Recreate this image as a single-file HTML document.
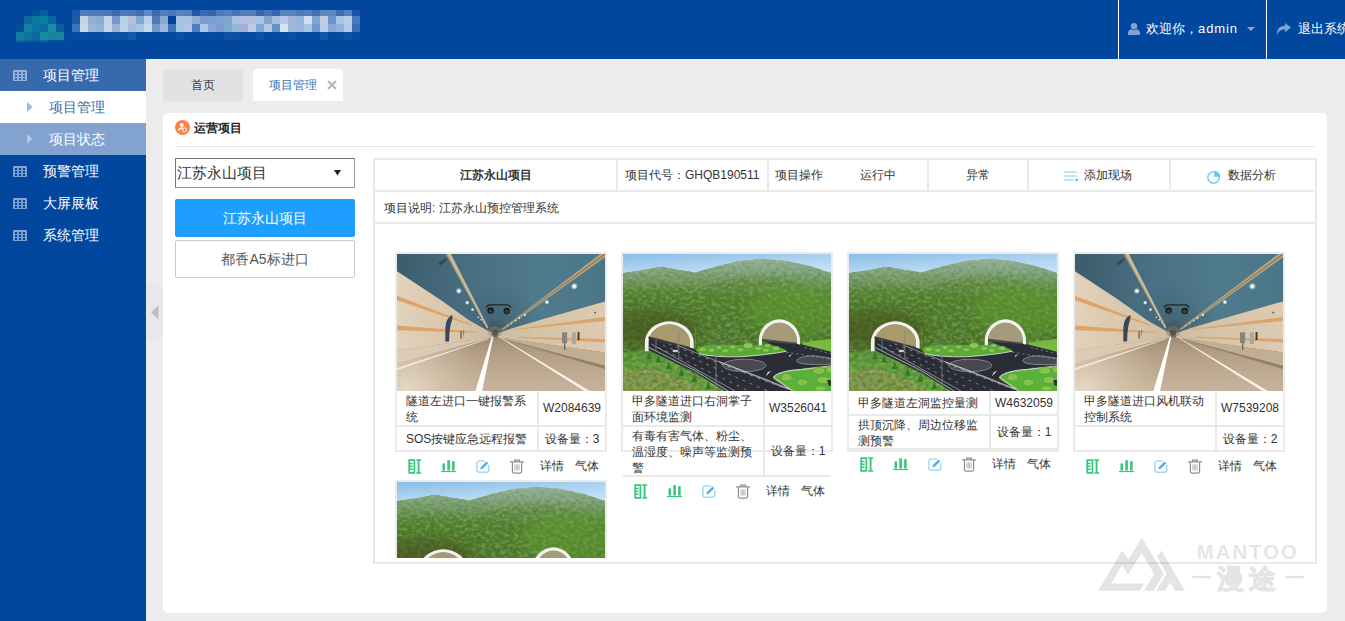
<!DOCTYPE html>
<html><head><meta charset="utf-8"><title>项目管理</title><style>
*{box-sizing:border-box;margin:0;padding:0}
html,body{width:1345px;height:621px;overflow:hidden;background:#ececec;font-family:"Liberation Sans",sans-serif;color:#333}
.a{position:absolute}
#hd{left:0;top:0;width:1345px;height:59px;background:#00479d}
#hd i{position:absolute;display:block}
#sb{left:0;top:59px;width:146px;height:562px;background:#00479d}
.mi{position:absolute;left:0;width:146px;height:32px;color:#fff;font-size:14px;line-height:32px}
.mi span{position:absolute;left:43px;top:0;white-space:nowrap}
.mi.sub span{left:49px}
.mi svg{position:absolute}
.vline{position:absolute;top:0;width:1px;height:59px;background:#fff}
.ht{position:absolute;color:#fff;font-size:13px;line-height:20px;top:19px;white-space:nowrap}
.tab{position:absolute;top:69px;height:32px;font-size:12px;line-height:32px;border-radius:4px 4px 0 0}
#panel{left:163px;top:113px;width:1164px;height:500px;background:#fff;border-radius:5px}
.ln{position:absolute;background:#e9e9e9}
.t12{position:absolute;font-size:12px;line-height:16px;white-space:nowrap;color:#333}
.card{position:absolute;width:212px;height:200px;border:2px solid #ebebeb;background:#fff}
.card .img{position:absolute;left:0;top:0;width:208px;height:137px;overflow:hidden}
.card .img svg{display:block}
.cc{position:absolute}
.ic{position:absolute}
</style></head><body>
<div id="hd" class="a">
<i style="left:32px;top:10px;width:8px;height:6px;background:#03509b"></i><i style="left:40px;top:10px;width:8px;height:6px;background:#055f9c"></i><i style="left:24px;top:16px;width:8px;height:8px;background:#0d69a0"></i><i style="left:32px;top:16px;width:8px;height:8px;background:#0a78a0"></i><i style="left:40px;top:16px;width:8px;height:8px;background:#047fa0"></i><i style="left:48px;top:16px;width:8px;height:8px;background:#0668a0"></i><i style="left:16px;top:24px;width:8px;height:8px;background:#034d9a"></i><i style="left:24px;top:24px;width:8px;height:8px;background:#14809f"></i><i style="left:32px;top:24px;width:8px;height:8px;background:#1073a0"></i><i style="left:40px;top:24px;width:8px;height:8px;background:#0f6ba3"></i><i style="left:48px;top:24px;width:8px;height:8px;background:#1c8ea3"></i><i style="left:56px;top:24px;width:8px;height:8px;background:#0d5f9b"></i><i style="left:16px;top:32px;width:8px;height:8px;background:#10809f"></i><i style="left:24px;top:32px;width:8px;height:8px;background:#0c769f"></i><i style="left:32px;top:32px;width:8px;height:8px;background:#0c68a0"></i><i style="left:40px;top:32px;width:8px;height:8px;background:#168a9f"></i><i style="left:48px;top:32px;width:8px;height:8px;background:#15849f"></i><i style="left:56px;top:32px;width:8px;height:8px;background:#1a859f"></i><i style="left:64px;top:32px;width:8px;height:8px;background:#05499a"></i><i style="left:16px;top:40px;width:8px;height:2px;background:#0a6a9f"></i><i style="left:24px;top:40px;width:8px;height:2px;background:#09659e"></i><i style="left:32px;top:40px;width:8px;height:2px;background:#085c9e"></i><i style="left:40px;top:40px;width:8px;height:2px;background:#0a689e"></i><i style="left:48px;top:40px;width:8px;height:2px;background:#04509b"></i><i style="left:56px;top:40px;width:8px;height:2px;background:#04509b"></i><i style="left:64px;top:40px;width:8px;height:2px;background:#024a9b"></i><i style="left:72px;top:10px;width:8px;height:6px;background:#1d57a5"></i><i style="left:72px;top:16px;width:8px;height:8px;background:#1c5aa8"></i><i style="left:72px;top:24px;width:8px;height:8px;background:#3d73b8"></i><i style="left:72px;top:32px;width:8px;height:8px;background:#064a9f"></i><i style="left:80px;top:10px;width:8px;height:6px;background:#4e7fbd"></i><i style="left:80px;top:16px;width:8px;height:8px;background:#c5d3e6"></i><i style="left:80px;top:24px;width:8px;height:8px;background:#cbd8e8"></i><i style="left:80px;top:32px;width:8px;height:8px;background:#0a4ca0"></i><i style="left:88px;top:10px;width:8px;height:6px;background:#4a7cbb"></i><i style="left:88px;top:16px;width:8px;height:8px;background:#94afd3"></i><i style="left:88px;top:24px;width:8px;height:8px;background:#9bb5d8"></i><i style="left:88px;top:32px;width:8px;height:8px;background:#084b9f"></i><i style="left:96px;top:10px;width:8px;height:6px;background:#4a7cbb"></i><i style="left:96px;top:16px;width:8px;height:8px;background:#88add2"></i><i style="left:96px;top:24px;width:8px;height:8px;background:#92b3da"></i><i style="left:96px;top:32px;width:8px;height:8px;background:#084b9f"></i><i style="left:104px;top:10px;width:8px;height:6px;background:#4678bb"></i><i style="left:104px;top:16px;width:8px;height:8px;background:#c3d3e8"></i><i style="left:104px;top:24px;width:8px;height:8px;background:#c6d6e9"></i><i style="left:104px;top:32px;width:8px;height:8px;background:#0c4ea1"></i><i style="left:112px;top:10px;width:8px;height:6px;background:#3a6cb3"></i><i style="left:112px;top:16px;width:8px;height:8px;background:#7595cb"></i><i style="left:112px;top:24px;width:8px;height:8px;background:#9bb2d8"></i><i style="left:112px;top:32px;width:8px;height:8px;background:#1050a3"></i><i style="left:120px;top:10px;width:8px;height:6px;background:#4a7cbb"></i><i style="left:120px;top:16px;width:8px;height:8px;background:#b3d2e8"></i><i style="left:120px;top:24px;width:8px;height:8px;background:#b9d3ea"></i><i style="left:120px;top:32px;width:8px;height:8px;background:#0c4ea1"></i><i style="left:128px;top:10px;width:8px;height:6px;background:#4a78b8"></i><i style="left:128px;top:16px;width:8px;height:8px;background:#b5c2dc"></i><i style="left:128px;top:24px;width:8px;height:8px;background:#a9bcdc"></i><i style="left:128px;top:32px;width:8px;height:8px;background:#1a58a8"></i><i style="left:136px;top:10px;width:8px;height:6px;background:#3a70b8"></i><i style="left:136px;top:16px;width:8px;height:8px;background:#7eaad5"></i><i style="left:136px;top:24px;width:8px;height:8px;background:#a6c4e6"></i><i style="left:136px;top:32px;width:8px;height:8px;background:#04489d"></i><i style="left:144px;top:10px;width:8px;height:6px;background:#5b8cc3"></i><i style="left:144px;top:16px;width:8px;height:8px;background:#bccfe7"></i><i style="left:144px;top:24px;width:8px;height:8px;background:#c8d8ec"></i><i style="left:144px;top:32px;width:8px;height:8px;background:#04489d"></i><i style="left:152px;top:10px;width:8px;height:6px;background:#3a6ab0"></i><i style="left:152px;top:16px;width:8px;height:8px;background:#4f7ab5"></i><i style="left:152px;top:24px;width:8px;height:8px;background:#7498c8"></i><i style="left:152px;top:32px;width:8px;height:8px;background:#04489d"></i><i style="left:160px;top:10px;width:8px;height:6px;background:#5080bb"></i><i style="left:160px;top:16px;width:8px;height:8px;background:#8aa8d2"></i><i style="left:160px;top:24px;width:8px;height:8px;background:#9cb8da"></i><i style="left:160px;top:32px;width:8px;height:8px;background:#04489d"></i><i style="left:168px;top:10px;width:8px;height:6px;background:#4878b8"></i><i style="left:168px;top:16px;width:8px;height:8px;background:#04439b"></i><i style="left:168px;top:24px;width:8px;height:8px;background:#3f73b8"></i><i style="left:168px;top:32px;width:8px;height:8px;background:#04489d"></i><i style="left:176px;top:10px;width:8px;height:6px;background:#5584c0"></i><i style="left:176px;top:16px;width:8px;height:8px;background:#a5c3e2"></i><i style="left:176px;top:24px;width:8px;height:8px;background:#a0c6e2"></i><i style="left:176px;top:32px;width:8px;height:8px;background:#0c4ea1"></i><i style="left:184px;top:10px;width:8px;height:6px;background:#4e82be"></i><i style="left:184px;top:16px;width:8px;height:8px;background:#a8c2e2"></i><i style="left:184px;top:24px;width:8px;height:8px;background:#b3c5e3"></i><i style="left:184px;top:32px;width:8px;height:8px;background:#04489d"></i><i style="left:192px;top:10px;width:8px;height:6px;background:#2458a5"></i><i style="left:192px;top:16px;width:8px;height:8px;background:#93aed5"></i><i style="left:192px;top:24px;width:8px;height:8px;background:#4a80c0"></i><i style="left:192px;top:32px;width:8px;height:8px;background:#04489d"></i><i style="left:200px;top:10px;width:8px;height:6px;background:#3a6cb3"></i><i style="left:200px;top:16px;width:8px;height:8px;background:#7b9bcb"></i><i style="left:200px;top:24px;width:8px;height:8px;background:#b0c6e4"></i><i style="left:200px;top:32px;width:8px;height:8px;background:#04489d"></i><i style="left:208px;top:10px;width:8px;height:6px;background:#3365ae"></i><i style="left:208px;top:16px;width:8px;height:8px;background:#7a9fd0"></i><i style="left:208px;top:24px;width:8px;height:8px;background:#8aa5d3"></i><i style="left:208px;top:32px;width:8px;height:8px;background:#084b9f"></i><i style="left:216px;top:10px;width:8px;height:6px;background:#4a7aba"></i><i style="left:216px;top:16px;width:8px;height:8px;background:#7ba2d3"></i><i style="left:216px;top:24px;width:8px;height:8px;background:#7d9bd3"></i><i style="left:216px;top:32px;width:8px;height:8px;background:#04489d"></i><i style="left:224px;top:10px;width:8px;height:6px;background:#5380bc"></i><i style="left:224px;top:16px;width:8px;height:8px;background:#7da6d0"></i><i style="left:224px;top:24px;width:8px;height:8px;background:#7bacd8"></i><i style="left:224px;top:32px;width:8px;height:8px;background:#1050a3"></i><i style="left:232px;top:10px;width:8px;height:6px;background:#4575b8"></i><i style="left:232px;top:16px;width:8px;height:8px;background:#a9c2de"></i><i style="left:232px;top:24px;width:8px;height:8px;background:#93b5d6"></i><i style="left:232px;top:32px;width:8px;height:8px;background:#0e4fa2"></i><i style="left:240px;top:10px;width:8px;height:6px;background:#4e80bc"></i><i style="left:240px;top:16px;width:8px;height:8px;background:#b3c0e2"></i><i style="left:240px;top:24px;width:8px;height:8px;background:#a5add9"></i><i style="left:240px;top:32px;width:8px;height:8px;background:#084b9f"></i><i style="left:248px;top:10px;width:8px;height:6px;background:#4e80bc"></i><i style="left:248px;top:16px;width:8px;height:8px;background:#b0c0de"></i><i style="left:248px;top:24px;width:8px;height:8px;background:#c0c8e3"></i><i style="left:248px;top:32px;width:8px;height:8px;background:#084b9f"></i><i style="left:256px;top:10px;width:8px;height:6px;background:#3468b3"></i><i style="left:256px;top:16px;width:8px;height:8px;background:#a3c5e6"></i><i style="left:256px;top:24px;width:8px;height:8px;background:#7ba8d6"></i><i style="left:256px;top:32px;width:8px;height:8px;background:#1252a4"></i><i style="left:264px;top:10px;width:8px;height:6px;background:#4676b8"></i><i style="left:264px;top:16px;width:8px;height:8px;background:#81a3d0"></i><i style="left:264px;top:24px;width:8px;height:8px;background:#b5c6e3"></i><i style="left:264px;top:32px;width:8px;height:8px;background:#04489d"></i><i style="left:272px;top:10px;width:8px;height:6px;background:#3368b3"></i><i style="left:272px;top:16px;width:8px;height:8px;background:#a5c0e0"></i><i style="left:272px;top:24px;width:8px;height:8px;background:#5d93c8"></i><i style="left:272px;top:32px;width:8px;height:8px;background:#084b9f"></i><i style="left:280px;top:10px;width:8px;height:6px;background:#5384be"></i><i style="left:280px;top:16px;width:8px;height:8px;background:#b5c8e6"></i><i style="left:280px;top:24px;width:8px;height:8px;background:#d8e2f0"></i><i style="left:280px;top:32px;width:8px;height:8px;background:#084b9f"></i><i style="left:288px;top:10px;width:8px;height:6px;background:#5885be"></i><i style="left:288px;top:16px;width:8px;height:8px;background:#a8b3d8"></i><i style="left:288px;top:24px;width:8px;height:8px;background:#a0b5da"></i><i style="left:288px;top:32px;width:8px;height:8px;background:#0c4ea1"></i><i style="left:296px;top:10px;width:8px;height:6px;background:#4a7dbc"></i><i style="left:296px;top:16px;width:8px;height:8px;background:#94b5dc"></i><i style="left:296px;top:24px;width:8px;height:8px;background:#9bb5dc"></i><i style="left:296px;top:32px;width:8px;height:8px;background:#04489d"></i><i style="left:304px;top:10px;width:8px;height:6px;background:#5080bd"></i><i style="left:304px;top:16px;width:8px;height:8px;background:#d5deee"></i><i style="left:304px;top:24px;width:8px;height:8px;background:#a8c8e2"></i><i style="left:304px;top:32px;width:8px;height:8px;background:#04489d"></i><i style="left:312px;top:10px;width:8px;height:6px;background:#3f72b6"></i><i style="left:312px;top:16px;width:8px;height:8px;background:#7ba5d3"></i><i style="left:312px;top:24px;width:8px;height:8px;background:#6d9bd0"></i><i style="left:312px;top:32px;width:8px;height:8px;background:#04489d"></i><i style="left:320px;top:10px;width:8px;height:6px;background:#5888c0"></i><i style="left:320px;top:16px;width:8px;height:8px;background:#c0cfe6"></i><i style="left:320px;top:24px;width:8px;height:8px;background:#b8cde6"></i><i style="left:320px;top:32px;width:8px;height:8px;background:#1555a5"></i><i style="left:328px;top:10px;width:8px;height:6px;background:#5a88c0"></i><i style="left:328px;top:16px;width:8px;height:8px;background:#6d93cb"></i><i style="left:328px;top:24px;width:8px;height:8px;background:#88a8d6"></i><i style="left:328px;top:32px;width:8px;height:8px;background:#04489d"></i><i style="left:336px;top:10px;width:8px;height:6px;background:#3a6db5"></i><i style="left:336px;top:16px;width:8px;height:8px;background:#a5c6e6"></i><i style="left:336px;top:24px;width:8px;height:8px;background:#8fb3dc"></i><i style="left:336px;top:32px;width:8px;height:8px;background:#084b9f"></i><i style="left:344px;top:10px;width:8px;height:6px;background:#4f82be"></i><i style="left:344px;top:16px;width:8px;height:8px;background:#b8cde6"></i><i style="left:344px;top:24px;width:8px;height:8px;background:#b5c8e6"></i><i style="left:344px;top:32px;width:8px;height:8px;background:#0e50a2"></i><i style="left:352px;top:10px;width:8px;height:6px;background:#1c54a3"></i><i style="left:352px;top:16px;width:8px;height:8px;background:#4a78b8"></i><i style="left:352px;top:24px;width:8px;height:8px;background:#3a6db5"></i><i style="left:352px;top:32px;width:8px;height:8px;background:#084b9f"></i>
<div class="vline" style="left:1118px"></div>
<div class="vline" style="left:1266px"></div>
<svg class="a" style="left:1128px;top:23px" width="12" height="12" viewBox="0 0 12 12"><circle cx="6" cy="3.2" r="3.2" fill="#7fa3d2"/><path fill="#7fa3d2" d="M0 12V9.5C0 7.5 1.8 6.4 3.5 6.2 4.2 6.8 5 7.1 6 7.1S7.8 6.8 8.5 6.2C10.2 6.4 12 7.5 12 9.5V12z"/></svg>
<div class="ht" style="left:1146px">欢迎你，<span style="letter-spacing:.9px">admin</span></div>
<svg class="a" style="left:1247px;top:27px" width="8" height="4" viewBox="0 0 8 4"><path fill="#9aa4b4" d="M0 0h8L4 4z"/></svg>
<svg class="a" style="left:1276px;top:23px" width="15" height="12" viewBox="0 0 15 12"><path fill="#7fa3d2" d="M9 0L15 4.6 9 9.2V6.4C5 6.4 2.5 8 1 12 .6 6.5 3.5 3 9 2.8z"/></svg>
<div class="ht" style="left:1298px">退出系统</div>
</div>
<div id="sb" class="a">
<div class="mi" style="top:0;background:#3769ad"><svg style="left:13px;top:11px" width="14" height="11" viewBox="0 0 14 11"><path fill="#fff" fill-opacity=".5" fill-rule="evenodd" d="M1 0h12a1 1 0 0 1 1 1v9a1 1 0 0 1-1 1H1a1 1 0 0 1-1-1V1a1 1 0 0 1 1-1zM1.9 2.1h2.2v1.9h-2.2zM1.9 5.1h2.2v1.9h-2.2zM1.9 8.1h2.2v1.9h-2.2zM5.9 2.1h2.2v1.9h-2.2zM5.9 5.1h2.2v1.9h-2.2zM5.9 8.1h2.2v1.9h-2.2zM9.9 2.1h2.2v1.9h-2.2zM9.9 5.1h2.2v1.9h-2.2zM9.9 8.1h2.2v1.9h-2.2z"/></svg><span>项目管理</span></div>
<div class="mi sub" style="top:32px;background:#fff;color:#3f6fb0"><svg style="left:27px;top:11px" width="6" height="10" viewBox="0 0 6 10"><path fill="#9db9dd" d="M0 0L5.5 5L0 10z"/></svg><span>项目管理</span></div>
<div class="mi sub" style="top:64px;background:#82a3cf"><svg style="left:27px;top:11px" width="6" height="10" viewBox="0 0 6 10"><path fill="#b4c9e6" d="M0 0L5.5 5L0 10z"/></svg><span>项目状态</span></div>
<div class="mi" style="top:96px"><svg style="left:13px;top:11px" width="14" height="11" viewBox="0 0 14 11"><path fill="#fff" fill-opacity=".5" fill-rule="evenodd" d="M1 0h12a1 1 0 0 1 1 1v9a1 1 0 0 1-1 1H1a1 1 0 0 1-1-1V1a1 1 0 0 1 1-1zM1.9 2.1h2.2v1.9h-2.2zM1.9 5.1h2.2v1.9h-2.2zM1.9 8.1h2.2v1.9h-2.2zM5.9 2.1h2.2v1.9h-2.2zM5.9 5.1h2.2v1.9h-2.2zM5.9 8.1h2.2v1.9h-2.2zM9.9 2.1h2.2v1.9h-2.2zM9.9 5.1h2.2v1.9h-2.2zM9.9 8.1h2.2v1.9h-2.2z"/></svg><span>预警管理</span></div>
<div class="mi" style="top:128px"><svg style="left:13px;top:11px" width="14" height="11" viewBox="0 0 14 11"><path fill="#fff" fill-opacity=".5" fill-rule="evenodd" d="M1 0h12a1 1 0 0 1 1 1v9a1 1 0 0 1-1 1H1a1 1 0 0 1-1-1V1a1 1 0 0 1 1-1zM1.9 2.1h2.2v1.9h-2.2zM1.9 5.1h2.2v1.9h-2.2zM1.9 8.1h2.2v1.9h-2.2zM5.9 2.1h2.2v1.9h-2.2zM5.9 5.1h2.2v1.9h-2.2zM5.9 8.1h2.2v1.9h-2.2zM9.9 2.1h2.2v1.9h-2.2zM9.9 5.1h2.2v1.9h-2.2zM9.9 8.1h2.2v1.9h-2.2z"/></svg><span>大屏展板</span></div>
<div class="mi" style="top:160px"><svg style="left:13px;top:11px" width="14" height="11" viewBox="0 0 14 11"><path fill="#fff" fill-opacity=".5" fill-rule="evenodd" d="M1 0h12a1 1 0 0 1 1 1v9a1 1 0 0 1-1 1H1a1 1 0 0 1-1-1V1a1 1 0 0 1 1-1zM1.9 2.1h2.2v1.9h-2.2zM1.9 5.1h2.2v1.9h-2.2zM1.9 8.1h2.2v1.9h-2.2zM5.9 2.1h2.2v1.9h-2.2zM5.9 5.1h2.2v1.9h-2.2zM5.9 8.1h2.2v1.9h-2.2zM9.9 2.1h2.2v1.9h-2.2zM9.9 5.1h2.2v1.9h-2.2zM9.9 8.1h2.2v1.9h-2.2z"/></svg><span>系统管理</span></div>
</div>
<!-- collapse handle -->
<svg class="a" style="left:146px;top:283px" width="17" height="58" viewBox="0 0 17 58"><path d="M0 0L17 6V52L0 58z" fill="#e8e8e8"/><path d="M12.5 22.5v14L5 29.5z" fill="#bdbdbd"/></svg>
<!-- tabs -->
<div class="tab" style="left:163px;width:80px;background:#e2e2e2;color:#333;text-align:center">首页</div>
<div class="tab" style="left:253px;width:90px;background:#fff;color:#3b73b9"><span style="position:absolute;left:16px">项目管理</span>
<svg class="a" style="left:74px;top:11px" width="10" height="10" viewBox="0 0 10 10"><path d="M1 1L9 9M9 1L1 9" stroke="#b5b5b5" stroke-width="2"/></svg></div>
<div id="panel" class="a"></div>
<!-- panel title -->
<svg class="a" style="left:175px;top:120px" width="15" height="15" viewBox="0 0 15 15"><circle cx="7.5" cy="7.5" r="7.5" fill="#ff7f45"/><circle cx="6.8" cy="5" r="2" fill="#fff"/><path d="M3 10.8c0-2 1.6-3.2 3.8-3.2 1 0 1.7.2 2.3.6" fill="#fff"/><circle cx="9.6" cy="9.8" r="2" fill="none" stroke="#fff" stroke-width=".9"/></svg>
<div class="a" style="left:194px;top:120px;font-size:12px;font-weight:bold;line-height:16px;color:#222">运营项目</div>
<div class="ln" style="left:175px;top:146px;width:1140px;height:1px;background:#e6e6e6"></div>
<!-- left column -->
<div class="a" style="left:175px;top:158px;width:180px;height:30px;border:1px solid #767676;border-bottom-color:#9a9a9a;border-right-color:#9a9a9a;background:#fff;font-size:15px;line-height:28px;color:#333"><span style="position:absolute;left:1px;top:0">江苏永山项目</span>
<svg class="a" style="left:158px;top:11px" width="7" height="6" viewBox="0 0 7 6"><path d="M0 0h7L3.5 5.5z" fill="#222"/></svg></div>
<div class="a" style="left:175px;top:199px;width:180px;height:38px;background:#1e9fff;border-radius:2px;color:#fff;font-size:14px;line-height:38px;text-align:center">江苏永山项目</div>
<div class="a" style="left:175px;top:240px;width:180px;height:38px;background:#fff;border:1px solid #c9c9c9;border-radius:2px;color:#555;font-size:14px;line-height:36px;text-align:center">都香A5标进口</div>
<!-- table frame -->
<div class="ln" style="left:373px;top:158px;width:944px;height:2px"></div>
<div class="ln" style="left:373px;top:158px;width:2px;height:406px"></div>
<div class="ln" style="left:1315px;top:158px;width:2px;height:406px"></div>
<div class="ln" style="left:373px;top:562px;width:944px;height:2px"></div>
<div class="ln" style="left:375px;top:190px;width:939px;height:2px"></div>
<div class="ln" style="left:375px;top:222px;width:940px;height:2px"></div>
<div class="ln" style="left:616px;top:160px;width:2px;height:30px"></div>
<div class="ln" style="left:767px;top:160px;width:2px;height:30px"></div>
<div class="ln" style="left:927px;top:160px;width:2px;height:30px"></div>
<div class="ln" style="left:1027px;top:160px;width:2px;height:30px"></div>
<div class="ln" style="left:1169px;top:160px;width:2px;height:30px"></div>
<div class="t12" style="left:375px;width:241px;text-align:center;top:167px;font-weight:bold">江苏永山项目</div>
<div class="t12" style="left:625px;top:167px">项目代号：GHQB190511</div>
<div class="t12" style="left:775px;top:167px">项目操作</div>
<div class="t12" style="left:860px;top:167px">运行中</div>
<div class="t12" style="left:966px;top:167px">异常</div>
<svg class="a" style="left:1064px;top:171px" width="14" height="11" viewBox="0 0 14 11"><path d="M0 1h13M0 5h13M0 9h10" stroke="#7fd0f5" stroke-width="1.2" fill="none"/><circle cx="12.6" cy="9" r="1.2" fill="#4fb0ee"/></svg>
<div class="t12" style="left:1084px;top:167px">添加现场</div>
<svg class="a" style="left:1207px;top:170px" width="14" height="14" viewBox="0 0 14 14"><circle cx="6.5" cy="7.5" r="5.7" fill="none" stroke="#6cc4f3" stroke-width="1.3"/><path d="M7.2 6.8V.7A6 6 0 0 1 13.3 6.8z" fill="#6cc4f3"/></svg>
<div class="t12" style="left:1228px;top:167px">数据分析</div>
<div class="t12" style="left:384px;top:200px">项目说明: 江苏永山预控管理系统</div>
<div class="card" style="left:395px;top:252px"><div class="img"><svg width="208" height="137" viewBox="18 18 895 589" preserveAspectRatio="none"><defs><linearGradient id="tc" x1="0" y1="0" x2="1" y2="0"><stop offset="0" stop-color="#3c5c6c"/><stop offset=".35" stop-color="#487082"/><stop offset=".7" stop-color="#507b8c"/><stop offset="1" stop-color="#4b7688"/></linearGradient><radialGradient id="tv" cx="440" cy="340" r="200" gradientUnits="userSpaceOnUse"><stop offset="0" stop-color="#3a4448" stop-opacity=".8"/><stop offset=".25" stop-color="#3e5664" stop-opacity=".4"/><stop offset="1" stop-color="#3a5a70" stop-opacity="0"/></radialGradient><linearGradient id="tl" x1="0" y1="0" x2="1" y2="0"><stop offset="0" stop-color="#e2d2ba"/><stop offset=".6" stop-color="#d8c6aa"/><stop offset="1" stop-color="#cdbca2"/></linearGradient><linearGradient id="tr" x1="1" y1="0" x2="0" y2="0"><stop offset="0" stop-color="#dccbb2"/><stop offset=".6" stop-color="#d6c4a8"/><stop offset="1" stop-color="#cdbca2"/></linearGradient><linearGradient id="trd" x1="0" y1="0" x2="0" y2="1"><stop offset="0" stop-color="#a08c74"/><stop offset=".35" stop-color="#b6a088"/><stop offset="1" stop-color="#c8b49c"/></linearGradient><radialGradient id="tg"><stop offset="0" stop-color="#fff"/><stop offset=".35" stop-color="#fff" stop-opacity=".9"/><stop offset="1" stop-color="#cfe4f0" stop-opacity="0"/></radialGradient><radialGradient id="th" cx="60" cy="600" r="330" gradientUnits="userSpaceOnUse"><stop offset="0" stop-color="#e8dcc8" stop-opacity=".9"/><stop offset="1" stop-color="#d8c8b0" stop-opacity="0"/></radialGradient></defs>
<rect x="18" y="18" width="895" height="589" fill="url(#tc)"/><rect x="18" y="18" width="895" height="400" fill="url(#tv)"/>
<path d="M18 92L200 212 330 304 405 346 428 356V378L18 432z" fill="url(#tl)"/>
<path d="M913 222L700 282 520 335 470 352 452 358V378L913 442z" fill="url(#tr)"/>
<path d="M18 197L340 321V327L18 217zM18 325L365 352V357L18 346z" fill="#dca46a"/>
<path d="M913 289L520 341V345L913 306zM913 383L540 374V378L913 398z" fill="#dca46a"/>
<path d="M18 432L428 376H452L913 442V607H18z" fill="url(#trd)"/>
<path d="M18 432L428 376 18 488z" fill="#d9c4b2"/><path d="M18 488L428 376 18 502z" fill="#bca48e"/>
<path d="M913 442L452 376 913 498z" fill="#c2ae92"/>
<path d="M913 498L452 376 913 512z" fill="#908268"/>
<rect x="18" y="380" width="895" height="227" fill="url(#th)"/>
<path d="M427 372H433L384 607H355z" fill="#fff"/><path d="M452 372H456L848 607H824z" fill="#f6f2ea"/><path d="M18 508L408 382 412 383 18 518z" fill="#efe8dc"/>
<path d="M228 18H250L412 336 405 338z" fill="#cbba96"/><path d="M229 18h4L406 337h-2z" fill="#8f8064"/>
<path d="M893 18H913V32L474 346 466 342z" fill="#b6a480"/><path d="M909 18h4v4L470 345 468 344z" fill="#8a7a5c"/>
<path d="M196 58L228 36 232 42 206 66z" fill="#3a4248"/>
<ellipse cx="440" cy="352" rx="30" ry="24" fill="#8a7c6c" opacity=".5"/><ellipse cx="440" cy="356" rx="13" ry="12" fill="#4a4640" opacity=".6"/>
<path d="M402 250Q404 238 420 237H492Q506 238 508 250" fill="none" stroke="#20262a" stroke-width="5"/><circle cx="421" cy="261" r="14" fill="#181a1c"/><circle cx="490" cy="263" r="14" fill="#181a1c"/><circle cx="421" cy="263" r="8" fill="#4a4038"/><circle cx="490" cy="265" r="8" fill="#4a4038"/>
<path d="M226 394V335Q229 292 256 279V300Q244 325 242 394z" fill="#384858"/>
<path d="M290 348h8v34h-8zM302 346l6 0-4 34z" fill="#8a7868"/>
<rect x="728" y="355" width="22" height="46" fill="#868478"/><rect x="770" y="355" width="18" height="50" fill="#aaa89c"/><rect x="795" y="354" width="8" height="34" fill="#3a3028"/><path d="M740 401v30" stroke="#4a4038" stroke-width="4"/><circle cx="871" cy="270" r="4" fill="#5a4a3a"/>
<g fill="url(#tg)"><circle cx="284" cy="177" r="14"/><circle cx="320" cy="227" r="10"/><circle cx="343" cy="257" r="8"/><circle cx="368" cy="290" r="5"/><circle cx="380" cy="301" r="5"/><circle cx="392" cy="314" r="4"/><circle cx="402" cy="326" r="3"/><circle cx="781" cy="157" r="16"/><circle cx="663" cy="225" r="11"/><circle cx="568" cy="280" r="7"/><circle cx="545" cy="293" r="6"/><circle cx="529" cy="303" r="5"/><circle cx="510" cy="315" r="4"/><circle cx="495" cy="325" r="3"/></g></svg>
</div></div><div class="ln" style="left:397px;top:425px;width:208px;height:2px"></div><div class="ln" style="left:397px;top:450px;width:208px;height:2px"></div><div class="ln" style="left:537px;top:391px;width:2px;height:59px"></div><div class="t12" style="left:406px;top:393.0px">隧道左进口一键报警系</div><div class="t12" style="left:406px;top:409.0px">统</div><div class="t12" style="left:539px;width:66px;text-align:center;top:400.0px">W2084639</div><div class="t12" style="left:406px;top:430.5px">SOS按键应急远程报警</div><div class="t12" style="left:539px;width:66px;text-align:center;top:430.5px">设备量：3</div><svg class="ic" style="left:408px;top:459px" width="14" height="15" viewBox="0 0 14 15"><g fill="none" stroke="#36c67c"><path d="M1.2 1.2h5.2v12.6H1.2z" stroke-width="1.7"/><path d="M1 4.4h3.6M1 7.2h3.6M1 10h3.6" stroke-width="1.5"/><path d="M10.6 1v13" stroke-width="1.9"/><path d="M8.2 1h5M8.2 14h5" stroke-width="1.5"/></g></svg><svg class="ic" style="left:441px;top:460px" width="15" height="13" viewBox="0 0 15 13"><g fill="#36c67c"><rect x="1.5" y="3.4" width="2.5" height="7.2"/><rect x="6.3" y="0.2" width="2.6" height="10.4"/><rect x="11.1" y="1.2" width="2.6" height="9.4"/><rect x="0" y="11" width="15" height="1.1"/></g></svg><svg class="ic" style="left:476px;top:460px" width="14" height="13" viewBox="0 0 14 13"><path d="M9 .9H3.2A2.3 2.3 0 0 0 .9 3.2v6.7a2.3 2.3 0 0 0 2.3 2.3h7.2a2.3 2.3 0 0 0 2.3-2.3V5" fill="#fff" stroke="#a6d8f6" stroke-width="1.5"/><path d="M4.2 9.4l.7-2.5 5.6-5.4 1.8 1.8-5.6 5.4z" fill="#55aeea"/></svg><svg class="ic" style="left:510px;top:459px" width="14" height="15" viewBox="0 0 14 15"><g fill="none" stroke="#8e8e8e" stroke-width="1.2"><path d="M0 2.9h14M4.6 2.7V1.1h4.8v1.6"/><path d="M2.4 3.2v9.4c0 .9.6 1.5 1.5 1.5h6.2c.9 0 1.5-.6 1.5-1.5V3.2"/><path d="M4.9 5.4v6M6.3 5.4v6M7.7 5.4v6M9.1 5.4v6" stroke-width=".8" stroke="#a8a8a8"/></g></svg><div class="t12" style="left:540px;top:458px">详情</div><div class="t12" style="left:575px;top:458px">气体</div><div class="card" style="left:621px;top:252px"><div class="img"><svg width="208" height="137" viewBox="18 18 895 589" preserveAspectRatio="none"><defs><linearGradient id="hs" x1="0" y1="0" x2="0" y2="1"><stop offset="0" stop-color="#86bde8"/><stop offset="1" stop-color="#dcedf7"/></linearGradient><linearGradient id="hm" x1="0" y1="0" x2="0" y2="1"><stop offset="0" stop-color="#93b09e"/><stop offset=".09" stop-color="#7fa282"/><stop offset=".19" stop-color="#638f50"/><stop offset=".3" stop-color="#477a28"/><stop offset=".7" stop-color="#3f6a1e"/><stop offset="1" stop-color="#38581c"/></linearGradient><filter id="hn" x="0" y="0" width="100%" height="100%"><feTurbulence type="fractalNoise" baseFrequency=".055 .075" numOctaves="3" seed="7"/><feColorMatrix values="0 0 0 0 .1  0 0 0 0 .2  0 0 0 0 .04  2 0 0 0 -.6"/></filter><filter id="hn2" x="0" y="0" width="100%" height="100%"><feTurbulence type="fractalNoise" baseFrequency=".05 .07" numOctaves="3" seed="23"/><feColorMatrix values="0 0 0 0 .4  0 0 0 0 .62  0 0 0 0 .18  0 1.7 0 0 -.7"/></filter><filter id="hb" x="-20%" y="-20%" width="140%" height="140%"><feGaussianBlur stdDeviation="28"/></filter><filter id="hb2"><feGaussianBlur stdDeviation="2.5"/></filter><linearGradient id="hs2" x1="0" y1="0" x2="1" y2="0"><stop offset="0" stop-color="#fff" stop-opacity="0"/><stop offset="1" stop-color="#fff" stop-opacity=".28"/></linearGradient><linearGradient id="hz" x1="0" y1="0" x2="0" y2="1"><stop offset="0" stop-color="#9ab8a8" stop-opacity=".7"/><stop offset="1" stop-color="#7a9e78" stop-opacity="0"/></linearGradient><clipPath id="hc"><path d="M18 100L100 88 180 73 250 85 330 98 420 72 520 48 620 40 720 48 820 70 913 100V607H18z"/></clipPath></defs>
<rect x="18" y="18" width="895" height="140" fill="url(#hs)"/><rect x="18" y="18" width="895" height="140" fill="url(#hs2)"/>
<path d="M18 100L100 88 180 73 250 85 330 98 420 72 520 48 620 40 720 48 820 70 913 100V607H18z" fill="url(#hm)" filter="url(#hb2)"/>
<path d="M18 440L130 432 300 520 470 607H18z" fill="#62a83a"/><path d="M18 530L120 505 260 550 360 607H18z" fill="#9c9458" opacity=".7" filter="url(#hb2)"/><path d="M18 440L130 432 200 470 100 484 18 474z" fill="#4f9a34"/><g clip-path="url(#hc)"><rect x="18" y="40" width="895" height="567" filter="url(#hn)"/><rect x="18" y="40" width="895" height="567" filter="url(#hn2)" opacity=".6"/><ellipse cx="140" cy="340" rx="210" ry="80" fill="#44501c" opacity=".6" filter="url(#hb)"/><ellipse cx="760" cy="260" rx="210" ry="110" fill="#62a030" opacity=".45" filter="url(#hb)"/><path d="M18 100L100 88 180 73 250 85 330 98 420 72 520 48 620 40 720 48 820 70 913 100V190L820 150 720 120 620 110 520 118 420 142 330 168 250 158 180 146 100 160 18 172z" fill="url(#hz)" filter="url(#hb2)"/></g>

<path d="M790 400L913 382V440L790 420z" fill="#7ab844"/>
<path d="M125 372L320 425 380 456 560 456 720 434 620 392 775 404 913 438V496L800 508 700 526 662 556 745 607H455L330 528 130 432z" fill="#2a2c36"/>
<path d="M330 430Q350 410 420 408L640 410Q715 420 722 436 640 452 520 460 400 462 345 446z" fill="#5cab36"/><path d="M345 446Q400 462 520 460 640 452 722 436" fill="none" stroke="#d8dcd0" stroke-width="4"/>
<g fill="#8cc652" stroke="#3c7e2a" stroke-width="3" stroke-opacity=".55"><ellipse cx="360" cy="428" rx="16" ry="10"/><ellipse cx="400" cy="432" rx="14" ry="9"/><ellipse cx="430" cy="420" rx="13" ry="9"/><ellipse cx="458" cy="434" rx="15" ry="9"/><ellipse cx="490" cy="418" rx="13" ry="9"/><ellipse cx="522" cy="430" rx="15" ry="9"/><ellipse cx="556" cy="412" rx="20" ry="12"/><ellipse cx="600" cy="424" rx="15" ry="9"/><ellipse cx="632" cy="432" rx="15" ry="9"/><ellipse cx="640" cy="412" rx="14" ry="8"/><ellipse cx="676" cy="424" rx="16" ry="10"/></g>
<path d="M112 436V400A104 92 0 0 1 322 400V424L306 420V400A88 78 0 0 0 128 400V436z" fill="#f2f2ee"/><path d="M128 380V400A88 78 0 0 1 306 400V420L130 374z" fill="#a89a6c"/><path d="M128 372L306 418V424L128 384z" fill="#3a3c40"/>
<path d="M602 410V392A88 92 0 0 1 780 392V408L766 404V392A75 78 0 0 0 616 392V410z" fill="#f2f2ee"/><path d="M616 388V392A75 78 0 0 1 766 392V402L616 384z" fill="#a59a7c"/><path d="M616 382L766 400V406L616 394z" fill="#4a4a48"/>
<ellipse cx="540" cy="497" rx="92" ry="27" fill="#484850" stroke="#c8c8c8" stroke-width="2.2"/><path d="M765 474Q790 452 850 456L913 466V492Q840 496 790 490 762 484 765 474z" fill="#484850" stroke="#c8c8c8" stroke-width="2.2"/>
<path d="M665 548Q690 520 790 514L913 500V607H748z" fill="#5ab23a"/><path d="M665 548Q690 520 790 514L913 500" fill="none" stroke="#c8ccc0" stroke-width="5"/><path d="M665 548L748 607" stroke="#c8ccc0" stroke-width="5"/>
<g fill="#84c24c" stroke="#3c7e2a" stroke-width="3" stroke-opacity=".5"><ellipse cx="722" cy="548" rx="24" ry="16"/><ellipse cx="790" cy="570" rx="24" ry="15"/><ellipse cx="860" cy="520" rx="26" ry="16"/><ellipse cx="880" cy="560" rx="28" ry="16"/><ellipse cx="868" cy="596" rx="24" ry="12"/><ellipse cx="905" cy="515" rx="12" ry="16"/></g><path d="M896 560h17v24h-10z" fill="#2c3a20"/>
<path d="M130 420L330 520 470 607" fill="none" stroke="#8c9aa0" stroke-width="5"/>
<g stroke="#dcdcdc" stroke-width="2.6" fill="none" stroke-dasharray="12 22" opacity=".85"><path d="M190 410L640 607"/><path d="M170 420L560 607"/><path d="M215 405L700 590"/></g><path d="M140 405L500 607M250 410L730 600" stroke="#d0d0d0" stroke-width="2.5" fill="none"/><path d="M430 480L640 560 736 600" stroke="#e8e8e8" stroke-width="3" fill="none"/><path d="M655 520l-22 24 8-18zM745 450l-14 12 4-10z" fill="#fff"/>
<path d="M800 420L913 446M720 440L913 470" stroke="#c8c8c8" stroke-width="2" fill="none" stroke-dasharray="10 12"/>
<path d="M258 352V470M418 402V590M160 385V430" stroke="#7c8a8c" stroke-width="3.5"/><path d="M258 352l22-6M418 402l60-18M330 330V420M500 300V400" stroke="#7c8a8c" stroke-width="2.5" fill="none" opacity=".8"/>
<g fill="#347a26"><path d="M130 440l12 30h-24zM170 452l12 32h-24zM215 480l13 34h-26zM270 505l13 36h-26zM325 532l13 36h-26zM385 565l12 34h-24z"/></g><path d="M232 430h22v10h-22z" fill="#c8ccd0"/></svg>
</div></div><div class="ln" style="left:623px;top:425px;width:208px;height:2px"></div><div class="ln" style="left:623px;top:475px;width:208px;height:2px"></div><div class="ln" style="left:763px;top:391px;width:2px;height:84px"></div><div class="t12" style="left:632px;top:393.0px">甲多隧道进口右洞掌子</div><div class="t12" style="left:632px;top:409.0px">面环境监测</div><div class="t12" style="left:765px;width:66px;text-align:center;top:400.0px">W3526041</div><div class="t12" style="left:632px;top:428.0px">有毒有害气体、粉尘、</div><div class="t12" style="left:632px;top:444.0px">温湿度、噪声等监测预</div><div class="t12" style="left:632px;top:460.0px">警</div><div class="t12" style="left:765px;width:66px;text-align:center;top:443.0px">设备量：1</div><svg class="ic" style="left:634px;top:484px" width="14" height="15" viewBox="0 0 14 15"><g fill="none" stroke="#36c67c"><path d="M1.2 1.2h5.2v12.6H1.2z" stroke-width="1.7"/><path d="M1 4.4h3.6M1 7.2h3.6M1 10h3.6" stroke-width="1.5"/><path d="M10.6 1v13" stroke-width="1.9"/><path d="M8.2 1h5M8.2 14h5" stroke-width="1.5"/></g></svg><svg class="ic" style="left:667px;top:485px" width="15" height="13" viewBox="0 0 15 13"><g fill="#36c67c"><rect x="1.5" y="3.4" width="2.5" height="7.2"/><rect x="6.3" y="0.2" width="2.6" height="10.4"/><rect x="11.1" y="1.2" width="2.6" height="9.4"/><rect x="0" y="11" width="15" height="1.1"/></g></svg><svg class="ic" style="left:702px;top:485px" width="14" height="13" viewBox="0 0 14 13"><path d="M9 .9H3.2A2.3 2.3 0 0 0 .9 3.2v6.7a2.3 2.3 0 0 0 2.3 2.3h7.2a2.3 2.3 0 0 0 2.3-2.3V5" fill="#fff" stroke="#a6d8f6" stroke-width="1.5"/><path d="M4.2 9.4l.7-2.5 5.6-5.4 1.8 1.8-5.6 5.4z" fill="#55aeea"/></svg><svg class="ic" style="left:736px;top:484px" width="14" height="15" viewBox="0 0 14 15"><g fill="none" stroke="#8e8e8e" stroke-width="1.2"><path d="M0 2.9h14M4.6 2.7V1.1h4.8v1.6"/><path d="M2.4 3.2v9.4c0 .9.6 1.5 1.5 1.5h6.2c.9 0 1.5-.6 1.5-1.5V3.2"/><path d="M4.9 5.4v6M6.3 5.4v6M7.7 5.4v6M9.1 5.4v6" stroke-width=".8" stroke="#a8a8a8"/></g></svg><div class="t12" style="left:766px;top:483px">详情</div><div class="t12" style="left:801px;top:483px">气体</div><div class="card" style="left:847px;top:252px"><div class="img"><svg width="208" height="137" viewBox="18 18 895 589" preserveAspectRatio="none"><defs><linearGradient id="hs" x1="0" y1="0" x2="0" y2="1"><stop offset="0" stop-color="#86bde8"/><stop offset="1" stop-color="#dcedf7"/></linearGradient><linearGradient id="hm" x1="0" y1="0" x2="0" y2="1"><stop offset="0" stop-color="#93b09e"/><stop offset=".09" stop-color="#7fa282"/><stop offset=".19" stop-color="#638f50"/><stop offset=".3" stop-color="#477a28"/><stop offset=".7" stop-color="#3f6a1e"/><stop offset="1" stop-color="#38581c"/></linearGradient><filter id="hn" x="0" y="0" width="100%" height="100%"><feTurbulence type="fractalNoise" baseFrequency=".055 .075" numOctaves="3" seed="7"/><feColorMatrix values="0 0 0 0 .1  0 0 0 0 .2  0 0 0 0 .04  2 0 0 0 -.6"/></filter><filter id="hn2" x="0" y="0" width="100%" height="100%"><feTurbulence type="fractalNoise" baseFrequency=".05 .07" numOctaves="3" seed="23"/><feColorMatrix values="0 0 0 0 .4  0 0 0 0 .62  0 0 0 0 .18  0 1.7 0 0 -.7"/></filter><filter id="hb" x="-20%" y="-20%" width="140%" height="140%"><feGaussianBlur stdDeviation="28"/></filter><filter id="hb2"><feGaussianBlur stdDeviation="2.5"/></filter><linearGradient id="hs2" x1="0" y1="0" x2="1" y2="0"><stop offset="0" stop-color="#fff" stop-opacity="0"/><stop offset="1" stop-color="#fff" stop-opacity=".28"/></linearGradient><linearGradient id="hz" x1="0" y1="0" x2="0" y2="1"><stop offset="0" stop-color="#9ab8a8" stop-opacity=".7"/><stop offset="1" stop-color="#7a9e78" stop-opacity="0"/></linearGradient><clipPath id="hc"><path d="M18 100L100 88 180 73 250 85 330 98 420 72 520 48 620 40 720 48 820 70 913 100V607H18z"/></clipPath></defs>
<rect x="18" y="18" width="895" height="140" fill="url(#hs)"/><rect x="18" y="18" width="895" height="140" fill="url(#hs2)"/>
<path d="M18 100L100 88 180 73 250 85 330 98 420 72 520 48 620 40 720 48 820 70 913 100V607H18z" fill="url(#hm)" filter="url(#hb2)"/>
<path d="M18 440L130 432 300 520 470 607H18z" fill="#62a83a"/><path d="M18 530L120 505 260 550 360 607H18z" fill="#9c9458" opacity=".7" filter="url(#hb2)"/><path d="M18 440L130 432 200 470 100 484 18 474z" fill="#4f9a34"/><g clip-path="url(#hc)"><rect x="18" y="40" width="895" height="567" filter="url(#hn)"/><rect x="18" y="40" width="895" height="567" filter="url(#hn2)" opacity=".6"/><ellipse cx="140" cy="340" rx="210" ry="80" fill="#44501c" opacity=".6" filter="url(#hb)"/><ellipse cx="760" cy="260" rx="210" ry="110" fill="#62a030" opacity=".45" filter="url(#hb)"/><path d="M18 100L100 88 180 73 250 85 330 98 420 72 520 48 620 40 720 48 820 70 913 100V190L820 150 720 120 620 110 520 118 420 142 330 168 250 158 180 146 100 160 18 172z" fill="url(#hz)" filter="url(#hb2)"/></g>

<path d="M790 400L913 382V440L790 420z" fill="#7ab844"/>
<path d="M125 372L320 425 380 456 560 456 720 434 620 392 775 404 913 438V496L800 508 700 526 662 556 745 607H455L330 528 130 432z" fill="#2a2c36"/>
<path d="M330 430Q350 410 420 408L640 410Q715 420 722 436 640 452 520 460 400 462 345 446z" fill="#5cab36"/><path d="M345 446Q400 462 520 460 640 452 722 436" fill="none" stroke="#d8dcd0" stroke-width="4"/>
<g fill="#8cc652" stroke="#3c7e2a" stroke-width="3" stroke-opacity=".55"><ellipse cx="360" cy="428" rx="16" ry="10"/><ellipse cx="400" cy="432" rx="14" ry="9"/><ellipse cx="430" cy="420" rx="13" ry="9"/><ellipse cx="458" cy="434" rx="15" ry="9"/><ellipse cx="490" cy="418" rx="13" ry="9"/><ellipse cx="522" cy="430" rx="15" ry="9"/><ellipse cx="556" cy="412" rx="20" ry="12"/><ellipse cx="600" cy="424" rx="15" ry="9"/><ellipse cx="632" cy="432" rx="15" ry="9"/><ellipse cx="640" cy="412" rx="14" ry="8"/><ellipse cx="676" cy="424" rx="16" ry="10"/></g>
<path d="M112 436V400A104 92 0 0 1 322 400V424L306 420V400A88 78 0 0 0 128 400V436z" fill="#f2f2ee"/><path d="M128 380V400A88 78 0 0 1 306 400V420L130 374z" fill="#a89a6c"/><path d="M128 372L306 418V424L128 384z" fill="#3a3c40"/>
<path d="M602 410V392A88 92 0 0 1 780 392V408L766 404V392A75 78 0 0 0 616 392V410z" fill="#f2f2ee"/><path d="M616 388V392A75 78 0 0 1 766 392V402L616 384z" fill="#a59a7c"/><path d="M616 382L766 400V406L616 394z" fill="#4a4a48"/>
<ellipse cx="540" cy="497" rx="92" ry="27" fill="#484850" stroke="#c8c8c8" stroke-width="2.2"/><path d="M765 474Q790 452 850 456L913 466V492Q840 496 790 490 762 484 765 474z" fill="#484850" stroke="#c8c8c8" stroke-width="2.2"/>
<path d="M665 548Q690 520 790 514L913 500V607H748z" fill="#5ab23a"/><path d="M665 548Q690 520 790 514L913 500" fill="none" stroke="#c8ccc0" stroke-width="5"/><path d="M665 548L748 607" stroke="#c8ccc0" stroke-width="5"/>
<g fill="#84c24c" stroke="#3c7e2a" stroke-width="3" stroke-opacity=".5"><ellipse cx="722" cy="548" rx="24" ry="16"/><ellipse cx="790" cy="570" rx="24" ry="15"/><ellipse cx="860" cy="520" rx="26" ry="16"/><ellipse cx="880" cy="560" rx="28" ry="16"/><ellipse cx="868" cy="596" rx="24" ry="12"/><ellipse cx="905" cy="515" rx="12" ry="16"/></g><path d="M896 560h17v24h-10z" fill="#2c3a20"/>
<path d="M130 420L330 520 470 607" fill="none" stroke="#8c9aa0" stroke-width="5"/>
<g stroke="#dcdcdc" stroke-width="2.6" fill="none" stroke-dasharray="12 22" opacity=".85"><path d="M190 410L640 607"/><path d="M170 420L560 607"/><path d="M215 405L700 590"/></g><path d="M140 405L500 607M250 410L730 600" stroke="#d0d0d0" stroke-width="2.5" fill="none"/><path d="M430 480L640 560 736 600" stroke="#e8e8e8" stroke-width="3" fill="none"/><path d="M655 520l-22 24 8-18zM745 450l-14 12 4-10z" fill="#fff"/>
<path d="M800 420L913 446M720 440L913 470" stroke="#c8c8c8" stroke-width="2" fill="none" stroke-dasharray="10 12"/>
<path d="M258 352V470M418 402V590M160 385V430" stroke="#7c8a8c" stroke-width="3.5"/><path d="M258 352l22-6M418 402l60-18M330 330V420M500 300V400" stroke="#7c8a8c" stroke-width="2.5" fill="none" opacity=".8"/>
<g fill="#347a26"><path d="M130 440l12 30h-24zM170 452l12 32h-24zM215 480l13 34h-26zM270 505l13 36h-26zM325 532l13 36h-26zM385 565l12 34h-24z"/></g><path d="M232 430h22v10h-22z" fill="#c8ccd0"/></svg>
</div></div><div class="ln" style="left:849px;top:414px;width:208px;height:2px"></div><div class="ln" style="left:849px;top:448px;width:208px;height:2px"></div><div class="ln" style="left:989px;top:391px;width:2px;height:57px"></div><div class="t12" style="left:858px;top:394.5px">甲多隧道左洞监控量测</div><div class="t12" style="left:991px;width:66px;text-align:center;top:394.5px">W4632059</div><div class="t12" style="left:858px;top:417.0px">拱顶沉降、周边位移监</div><div class="t12" style="left:858px;top:433.0px">测预警</div><div class="t12" style="left:991px;width:66px;text-align:center;top:424.0px">设备量：1</div><svg class="ic" style="left:860px;top:457px" width="14" height="15" viewBox="0 0 14 15"><g fill="none" stroke="#36c67c"><path d="M1.2 1.2h5.2v12.6H1.2z" stroke-width="1.7"/><path d="M1 4.4h3.6M1 7.2h3.6M1 10h3.6" stroke-width="1.5"/><path d="M10.6 1v13" stroke-width="1.9"/><path d="M8.2 1h5M8.2 14h5" stroke-width="1.5"/></g></svg><svg class="ic" style="left:893px;top:458px" width="15" height="13" viewBox="0 0 15 13"><g fill="#36c67c"><rect x="1.5" y="3.4" width="2.5" height="7.2"/><rect x="6.3" y="0.2" width="2.6" height="10.4"/><rect x="11.1" y="1.2" width="2.6" height="9.4"/><rect x="0" y="11" width="15" height="1.1"/></g></svg><svg class="ic" style="left:928px;top:458px" width="14" height="13" viewBox="0 0 14 13"><path d="M9 .9H3.2A2.3 2.3 0 0 0 .9 3.2v6.7a2.3 2.3 0 0 0 2.3 2.3h7.2a2.3 2.3 0 0 0 2.3-2.3V5" fill="#fff" stroke="#a6d8f6" stroke-width="1.5"/><path d="M4.2 9.4l.7-2.5 5.6-5.4 1.8 1.8-5.6 5.4z" fill="#55aeea"/></svg><svg class="ic" style="left:962px;top:457px" width="14" height="15" viewBox="0 0 14 15"><g fill="none" stroke="#8e8e8e" stroke-width="1.2"><path d="M0 2.9h14M4.6 2.7V1.1h4.8v1.6"/><path d="M2.4 3.2v9.4c0 .9.6 1.5 1.5 1.5h6.2c.9 0 1.5-.6 1.5-1.5V3.2"/><path d="M4.9 5.4v6M6.3 5.4v6M7.7 5.4v6M9.1 5.4v6" stroke-width=".8" stroke="#a8a8a8"/></g></svg><div class="t12" style="left:992px;top:456px">详情</div><div class="t12" style="left:1027px;top:456px">气体</div><div class="card" style="left:1073px;top:252px"><div class="img"><svg width="208" height="137" viewBox="18 18 895 589" preserveAspectRatio="none"><defs><linearGradient id="tc" x1="0" y1="0" x2="1" y2="0"><stop offset="0" stop-color="#3c5c6c"/><stop offset=".35" stop-color="#487082"/><stop offset=".7" stop-color="#507b8c"/><stop offset="1" stop-color="#4b7688"/></linearGradient><radialGradient id="tv" cx="440" cy="340" r="200" gradientUnits="userSpaceOnUse"><stop offset="0" stop-color="#3a4448" stop-opacity=".8"/><stop offset=".25" stop-color="#3e5664" stop-opacity=".4"/><stop offset="1" stop-color="#3a5a70" stop-opacity="0"/></radialGradient><linearGradient id="tl" x1="0" y1="0" x2="1" y2="0"><stop offset="0" stop-color="#e2d2ba"/><stop offset=".6" stop-color="#d8c6aa"/><stop offset="1" stop-color="#cdbca2"/></linearGradient><linearGradient id="tr" x1="1" y1="0" x2="0" y2="0"><stop offset="0" stop-color="#dccbb2"/><stop offset=".6" stop-color="#d6c4a8"/><stop offset="1" stop-color="#cdbca2"/></linearGradient><linearGradient id="trd" x1="0" y1="0" x2="0" y2="1"><stop offset="0" stop-color="#a08c74"/><stop offset=".35" stop-color="#b6a088"/><stop offset="1" stop-color="#c8b49c"/></linearGradient><radialGradient id="tg"><stop offset="0" stop-color="#fff"/><stop offset=".35" stop-color="#fff" stop-opacity=".9"/><stop offset="1" stop-color="#cfe4f0" stop-opacity="0"/></radialGradient><radialGradient id="th" cx="60" cy="600" r="330" gradientUnits="userSpaceOnUse"><stop offset="0" stop-color="#e8dcc8" stop-opacity=".9"/><stop offset="1" stop-color="#d8c8b0" stop-opacity="0"/></radialGradient></defs>
<rect x="18" y="18" width="895" height="589" fill="url(#tc)"/><rect x="18" y="18" width="895" height="400" fill="url(#tv)"/>
<path d="M18 92L200 212 330 304 405 346 428 356V378L18 432z" fill="url(#tl)"/>
<path d="M913 222L700 282 520 335 470 352 452 358V378L913 442z" fill="url(#tr)"/>
<path d="M18 197L340 321V327L18 217zM18 325L365 352V357L18 346z" fill="#dca46a"/>
<path d="M913 289L520 341V345L913 306zM913 383L540 374V378L913 398z" fill="#dca46a"/>
<path d="M18 432L428 376H452L913 442V607H18z" fill="url(#trd)"/>
<path d="M18 432L428 376 18 488z" fill="#d9c4b2"/><path d="M18 488L428 376 18 502z" fill="#bca48e"/>
<path d="M913 442L452 376 913 498z" fill="#c2ae92"/>
<path d="M913 498L452 376 913 512z" fill="#908268"/>
<rect x="18" y="380" width="895" height="227" fill="url(#th)"/>
<path d="M427 372H433L384 607H355z" fill="#fff"/><path d="M452 372H456L848 607H824z" fill="#f6f2ea"/><path d="M18 508L408 382 412 383 18 518z" fill="#efe8dc"/>
<path d="M228 18H250L412 336 405 338z" fill="#cbba96"/><path d="M229 18h4L406 337h-2z" fill="#8f8064"/>
<path d="M893 18H913V32L474 346 466 342z" fill="#b6a480"/><path d="M909 18h4v4L470 345 468 344z" fill="#8a7a5c"/>
<path d="M196 58L228 36 232 42 206 66z" fill="#3a4248"/>
<ellipse cx="440" cy="352" rx="30" ry="24" fill="#8a7c6c" opacity=".5"/><ellipse cx="440" cy="356" rx="13" ry="12" fill="#4a4640" opacity=".6"/>
<path d="M402 250Q404 238 420 237H492Q506 238 508 250" fill="none" stroke="#20262a" stroke-width="5"/><circle cx="421" cy="261" r="14" fill="#181a1c"/><circle cx="490" cy="263" r="14" fill="#181a1c"/><circle cx="421" cy="263" r="8" fill="#4a4038"/><circle cx="490" cy="265" r="8" fill="#4a4038"/>
<path d="M226 394V335Q229 292 256 279V300Q244 325 242 394z" fill="#384858"/>
<path d="M290 348h8v34h-8zM302 346l6 0-4 34z" fill="#8a7868"/>
<rect x="728" y="355" width="22" height="46" fill="#868478"/><rect x="770" y="355" width="18" height="50" fill="#aaa89c"/><rect x="795" y="354" width="8" height="34" fill="#3a3028"/><path d="M740 401v30" stroke="#4a4038" stroke-width="4"/><circle cx="871" cy="270" r="4" fill="#5a4a3a"/>
<g fill="url(#tg)"><circle cx="284" cy="177" r="14"/><circle cx="320" cy="227" r="10"/><circle cx="343" cy="257" r="8"/><circle cx="368" cy="290" r="5"/><circle cx="380" cy="301" r="5"/><circle cx="392" cy="314" r="4"/><circle cx="402" cy="326" r="3"/><circle cx="781" cy="157" r="16"/><circle cx="663" cy="225" r="11"/><circle cx="568" cy="280" r="7"/><circle cx="545" cy="293" r="6"/><circle cx="529" cy="303" r="5"/><circle cx="510" cy="315" r="4"/><circle cx="495" cy="325" r="3"/></g></svg>
</div></div><div class="ln" style="left:1075px;top:425px;width:208px;height:2px"></div><div class="ln" style="left:1075px;top:450px;width:208px;height:2px"></div><div class="ln" style="left:1215px;top:391px;width:2px;height:59px"></div><div class="t12" style="left:1084px;top:393.0px">甲多隧道进口风机联动</div><div class="t12" style="left:1084px;top:409.0px">控制系统</div><div class="t12" style="left:1217px;width:66px;text-align:center;top:400.0px">W7539208</div><div class="t12" style="left:1217px;width:66px;text-align:center;top:430.5px">设备量：2</div><svg class="ic" style="left:1086px;top:459px" width="14" height="15" viewBox="0 0 14 15"><g fill="none" stroke="#36c67c"><path d="M1.2 1.2h5.2v12.6H1.2z" stroke-width="1.7"/><path d="M1 4.4h3.6M1 7.2h3.6M1 10h3.6" stroke-width="1.5"/><path d="M10.6 1v13" stroke-width="1.9"/><path d="M8.2 1h5M8.2 14h5" stroke-width="1.5"/></g></svg><svg class="ic" style="left:1119px;top:460px" width="15" height="13" viewBox="0 0 15 13"><g fill="#36c67c"><rect x="1.5" y="3.4" width="2.5" height="7.2"/><rect x="6.3" y="0.2" width="2.6" height="10.4"/><rect x="11.1" y="1.2" width="2.6" height="9.4"/><rect x="0" y="11" width="15" height="1.1"/></g></svg><svg class="ic" style="left:1154px;top:460px" width="14" height="13" viewBox="0 0 14 13"><path d="M9 .9H3.2A2.3 2.3 0 0 0 .9 3.2v6.7a2.3 2.3 0 0 0 2.3 2.3h7.2a2.3 2.3 0 0 0 2.3-2.3V5" fill="#fff" stroke="#a6d8f6" stroke-width="1.5"/><path d="M4.2 9.4l.7-2.5 5.6-5.4 1.8 1.8-5.6 5.4z" fill="#55aeea"/></svg><svg class="ic" style="left:1188px;top:459px" width="14" height="15" viewBox="0 0 14 15"><g fill="none" stroke="#8e8e8e" stroke-width="1.2"><path d="M0 2.9h14M4.6 2.7V1.1h4.8v1.6"/><path d="M2.4 3.2v9.4c0 .9.6 1.5 1.5 1.5h6.2c.9 0 1.5-.6 1.5-1.5V3.2"/><path d="M4.9 5.4v6M6.3 5.4v6M7.7 5.4v6M9.1 5.4v6" stroke-width=".8" stroke="#a8a8a8"/></g></svg><div class="t12" style="left:1218px;top:458px">详情</div><div class="t12" style="left:1253px;top:458px">气体</div><div class="a" style="left:395px;top:480px;width:212px;height:78px;overflow:hidden"><div class="card" style="left:0;top:0"><div class="img"><svg width="208" height="137" viewBox="18 18 895 589" preserveAspectRatio="none"><defs><linearGradient id="hs" x1="0" y1="0" x2="0" y2="1"><stop offset="0" stop-color="#86bde8"/><stop offset="1" stop-color="#dcedf7"/></linearGradient><linearGradient id="hm" x1="0" y1="0" x2="0" y2="1"><stop offset="0" stop-color="#93b09e"/><stop offset=".09" stop-color="#7fa282"/><stop offset=".19" stop-color="#638f50"/><stop offset=".3" stop-color="#477a28"/><stop offset=".7" stop-color="#3f6a1e"/><stop offset="1" stop-color="#38581c"/></linearGradient><filter id="hn" x="0" y="0" width="100%" height="100%"><feTurbulence type="fractalNoise" baseFrequency=".055 .075" numOctaves="3" seed="7"/><feColorMatrix values="0 0 0 0 .1  0 0 0 0 .2  0 0 0 0 .04  2 0 0 0 -.6"/></filter><filter id="hn2" x="0" y="0" width="100%" height="100%"><feTurbulence type="fractalNoise" baseFrequency=".05 .07" numOctaves="3" seed="23"/><feColorMatrix values="0 0 0 0 .4  0 0 0 0 .62  0 0 0 0 .18  0 1.7 0 0 -.7"/></filter><filter id="hb" x="-20%" y="-20%" width="140%" height="140%"><feGaussianBlur stdDeviation="28"/></filter><filter id="hb2"><feGaussianBlur stdDeviation="2.5"/></filter><linearGradient id="hs2" x1="0" y1="0" x2="1" y2="0"><stop offset="0" stop-color="#fff" stop-opacity="0"/><stop offset="1" stop-color="#fff" stop-opacity=".28"/></linearGradient><linearGradient id="hz" x1="0" y1="0" x2="0" y2="1"><stop offset="0" stop-color="#9ab8a8" stop-opacity=".7"/><stop offset="1" stop-color="#7a9e78" stop-opacity="0"/></linearGradient><clipPath id="hc"><path d="M18 100L100 88 180 73 250 85 330 98 420 72 520 48 620 40 720 48 820 70 913 100V607H18z"/></clipPath></defs>
<rect x="18" y="18" width="895" height="140" fill="url(#hs)"/><rect x="18" y="18" width="895" height="140" fill="url(#hs2)"/>
<path d="M18 100L100 88 180 73 250 85 330 98 420 72 520 48 620 40 720 48 820 70 913 100V607H18z" fill="url(#hm)" filter="url(#hb2)"/>
<path d="M18 440L130 432 300 520 470 607H18z" fill="#62a83a"/><path d="M18 530L120 505 260 550 360 607H18z" fill="#9c9458" opacity=".7" filter="url(#hb2)"/><path d="M18 440L130 432 200 470 100 484 18 474z" fill="#4f9a34"/><g clip-path="url(#hc)"><rect x="18" y="40" width="895" height="567" filter="url(#hn)"/><rect x="18" y="40" width="895" height="567" filter="url(#hn2)" opacity=".6"/><ellipse cx="140" cy="340" rx="210" ry="80" fill="#44501c" opacity=".6" filter="url(#hb)"/><ellipse cx="760" cy="260" rx="210" ry="110" fill="#62a030" opacity=".45" filter="url(#hb)"/><path d="M18 100L100 88 180 73 250 85 330 98 420 72 520 48 620 40 720 48 820 70 913 100V190L820 150 720 120 620 110 520 118 420 142 330 168 250 158 180 146 100 160 18 172z" fill="url(#hz)" filter="url(#hb2)"/></g>

<path d="M790 400L913 382V440L790 420z" fill="#7ab844"/>
<path d="M125 372L320 425 380 456 560 456 720 434 620 392 775 404 913 438V496L800 508 700 526 662 556 745 607H455L330 528 130 432z" fill="#2a2c36"/>
<path d="M330 430Q350 410 420 408L640 410Q715 420 722 436 640 452 520 460 400 462 345 446z" fill="#5cab36"/><path d="M345 446Q400 462 520 460 640 452 722 436" fill="none" stroke="#d8dcd0" stroke-width="4"/>
<g fill="#8cc652" stroke="#3c7e2a" stroke-width="3" stroke-opacity=".55"><ellipse cx="360" cy="428" rx="16" ry="10"/><ellipse cx="400" cy="432" rx="14" ry="9"/><ellipse cx="430" cy="420" rx="13" ry="9"/><ellipse cx="458" cy="434" rx="15" ry="9"/><ellipse cx="490" cy="418" rx="13" ry="9"/><ellipse cx="522" cy="430" rx="15" ry="9"/><ellipse cx="556" cy="412" rx="20" ry="12"/><ellipse cx="600" cy="424" rx="15" ry="9"/><ellipse cx="632" cy="432" rx="15" ry="9"/><ellipse cx="640" cy="412" rx="14" ry="8"/><ellipse cx="676" cy="424" rx="16" ry="10"/></g>
<path d="M112 436V400A104 92 0 0 1 322 400V424L306 420V400A88 78 0 0 0 128 400V436z" fill="#f2f2ee"/><path d="M128 380V400A88 78 0 0 1 306 400V420L130 374z" fill="#a89a6c"/><path d="M128 372L306 418V424L128 384z" fill="#3a3c40"/>
<path d="M602 410V392A88 92 0 0 1 780 392V408L766 404V392A75 78 0 0 0 616 392V410z" fill="#f2f2ee"/><path d="M616 388V392A75 78 0 0 1 766 392V402L616 384z" fill="#a59a7c"/><path d="M616 382L766 400V406L616 394z" fill="#4a4a48"/>
<ellipse cx="540" cy="497" rx="92" ry="27" fill="#484850" stroke="#c8c8c8" stroke-width="2.2"/><path d="M765 474Q790 452 850 456L913 466V492Q840 496 790 490 762 484 765 474z" fill="#484850" stroke="#c8c8c8" stroke-width="2.2"/>
<path d="M665 548Q690 520 790 514L913 500V607H748z" fill="#5ab23a"/><path d="M665 548Q690 520 790 514L913 500" fill="none" stroke="#c8ccc0" stroke-width="5"/><path d="M665 548L748 607" stroke="#c8ccc0" stroke-width="5"/>
<g fill="#84c24c" stroke="#3c7e2a" stroke-width="3" stroke-opacity=".5"><ellipse cx="722" cy="548" rx="24" ry="16"/><ellipse cx="790" cy="570" rx="24" ry="15"/><ellipse cx="860" cy="520" rx="26" ry="16"/><ellipse cx="880" cy="560" rx="28" ry="16"/><ellipse cx="868" cy="596" rx="24" ry="12"/><ellipse cx="905" cy="515" rx="12" ry="16"/></g><path d="M896 560h17v24h-10z" fill="#2c3a20"/>
<path d="M130 420L330 520 470 607" fill="none" stroke="#8c9aa0" stroke-width="5"/>
<g stroke="#dcdcdc" stroke-width="2.6" fill="none" stroke-dasharray="12 22" opacity=".85"><path d="M190 410L640 607"/><path d="M170 420L560 607"/><path d="M215 405L700 590"/></g><path d="M140 405L500 607M250 410L730 600" stroke="#d0d0d0" stroke-width="2.5" fill="none"/><path d="M430 480L640 560 736 600" stroke="#e8e8e8" stroke-width="3" fill="none"/><path d="M655 520l-22 24 8-18zM745 450l-14 12 4-10z" fill="#fff"/>
<path d="M800 420L913 446M720 440L913 470" stroke="#c8c8c8" stroke-width="2" fill="none" stroke-dasharray="10 12"/>
<path d="M258 352V470M418 402V590M160 385V430" stroke="#7c8a8c" stroke-width="3.5"/><path d="M258 352l22-6M418 402l60-18M330 330V420M500 300V400" stroke="#7c8a8c" stroke-width="2.5" fill="none" opacity=".8"/>
<g fill="#347a26"><path d="M130 440l12 30h-24zM170 452l12 32h-24zM215 480l13 34h-26zM270 505l13 36h-26zM325 532l13 36h-26zM385 565l12 34h-24z"/></g><path d="M232 430h22v10h-22z" fill="#c8ccd0"/></svg>
</div></div></div>
<svg class="a" style="left:1090px;top:530px" width="230" height="70" viewBox="0 0 1345 409"><g fill="#000" opacity=".1"><path d="M48 355L187 120 225 172 303 45 432 255 372 355H316L375 255 303 135 222 260 187 205 125 312H316L293 355z"/><path d="M392 155L418 120 555 355H497L470 305 440 355H388L447 255z"/><rect x="598" y="268" width="110" height="14"/><rect x="1143" y="268" width="108" height="14"/><text x="625" y="168" font-family="Liberation Sans,sans-serif" font-weight="bold" font-size="119" textLength="585" lengthAdjust="spacing">MANTOO</text><text x="740" y="338" font-family="Liberation Sans,sans-serif" font-weight="bold" font-size="156" textLength="350" lengthAdjust="spacing" stroke="#000" stroke-width="7">漫途</text></g></svg>

</body></html>
